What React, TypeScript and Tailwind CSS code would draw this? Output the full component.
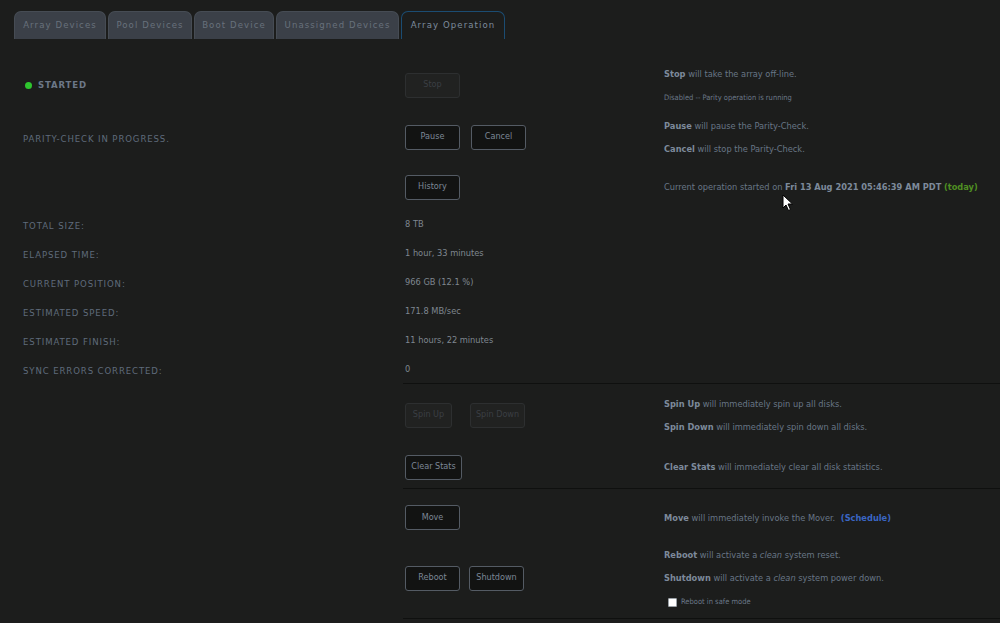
import React from "react";

const font = "font-['DejaVu_Sans_Condensed','Liberation_Sans',sans-serif]";

const Btn: React.FC<{ label: string; w?: string; disabled?: boolean }> = ({ label, w = "w-[55px]", disabled }) => (
  <div
    className={`${w} h-[25px] flex items-center justify-center rounded-[3px] border text-[9px] ${
      disabled
        ? "bg-[#212221] border-[#2d2f30] text-[#3b3f44]"
        : "bg-[#121312] border-[#545b64] text-[#7c8796]"
    }`}
  >
    {label}
  </div>
);

const Line: React.FC<{ children: React.ReactNode }> = ({ children }) => (
  <p className="text-[9.2px] leading-[14px] text-[#687686]">{children}</p>
);

const B: React.FC<{ children: React.ReactNode }> = ({ children }) => (
  <span className="font-bold text-[#7d8a9b]">{children}</span>
);

const Label: React.FC<{ children: React.ReactNode }> = ({ children }) => (
  <span className="pl-[23px] text-[9.5px] tracking-[0.9px] uppercase text-[#5f6b7b]">{children}</span>
);

const tabs = [
  { name: "Array Devices", w: "w-[92px]" },
  { name: "Pool Devices", w: "w-[84px]" },
  { name: "Boot Device", w: "w-[80px]" },
  { name: "Unassigned Devices", w: "w-[123px]" },
];

const stats = [
  ["Total size:", "8 TB"],
  ["Elapsed time:", "1 hour, 33 minutes"],
  ["Current position:", "966 GB (12.1 %)"],
  ["Estimated speed:", "171.8 MB/sec"],
  ["Estimated finish:", "11 hours, 22 minutes"],
  ["Sync errors corrected:", "0"],
];

const Row: React.FC<{
  h: string;
  gap?: string;
  midGap?: string;
  left?: React.ReactNode;
  mid?: React.ReactNode;
  right?: React.ReactNode;
}> = ({ h, gap = "gap-[9px]", midGap = "gap-[11px]", left, mid, right }) => (
  <div className={`grid grid-cols-[405px_259px_1fr] items-center ${h}`}>
    <div>{left}</div>
    <div className={`flex ${midGap}`}>{mid}</div>
    <div className={`flex flex-col ${gap}`}>{right}</div>
  </div>
);

const Divider = () => <div className="ml-[403px] h-px bg-[#0f100f]" />;

export default function App() {
  return (
    <div className={`relative w-[1000px] h-[623px] overflow-hidden bg-[#1c1d1c] ${font}`}>
      {/* tabs */}
      <div className="flex items-end gap-[2px] pl-[14px] pt-[11px] h-[39px]">
        {tabs.map((t) => (
          <div
            key={t.name}
            className={`${t.w} h-[28px] flex items-center justify-center rounded-t-[7px] bg-[#3b4048] border border-b-0 border-[#464c54] text-[9.5px] tracking-[1.1px] text-[#68717c]`}
          >
            {t.name}
          </div>
        ))}
        <div className="w-[104px] h-[28px] flex items-center justify-center rounded-t-[7px] border border-b-0 border-[#1b4c72] text-[9.5px] tracking-[1.1px] text-[#7d8c9d]">
          Array Operation
        </div>
      </div>

      <div className="pt-[22px]">
        <Row
          h="h-[48px]"
          gap="gap-[12px]"
          left={
            <div className="flex items-center gap-[6px] pl-[25px]">
              <span className="w-[7px] h-[7px] rounded-full bg-[#2ec52e]" />
              <span className="text-[9.5px] font-bold tracking-[0.9px] text-[#6c7888]">STARTED</span>
            </div>
          }
          mid={<Btn label="Stop" disabled />}
          right={
            <>
              <Line>
                <B>Stop</B> will take the array off-line.
              </Line>
              <p className="text-[7.5px] leading-[10px] text-[#6b7888]">Disabled -- Parity operation is running</p>
            </>
          }
        />
        <Row
          h="h-[56px]"
          left={<Label>Parity-Check in progress.</Label>}
          mid={
            <>
              <Btn label="Pause" />
              <Btn label="Cancel" />
            </>
          }
          right={
            <>
              <Line>
                <B>Pause</B> will pause the Parity-Check.
              </Line>
              <Line>
                <B>Cancel</B> will stop the Parity-Check.
              </Line>
            </>
          }
        />
        <Row
          h="h-[44px]"
          mid={<Btn label="History" />}
          right={
            <Line>
              Current operation started on <B>Fri 13 Aug 2021 05:46:39 AM PDT</B>{" "}
              <span className="font-bold text-[#4f8f22]">(today)</span>
            </Line>
          }
        />
        {stats.map(([k, v]) => (
          <Row
            key={k}
            h="h-[29px]"
            left={<Label>{k}</Label>}
            mid={<span className="text-[9.2px] text-[#7f8790]">{v}</span>}
          />
        ))}
        <Divider />
        <Row
          h="h-[62px]"
          midGap="gap-[18px]"
          mid={
            <>
              <Btn label="Spin Up" w="w-[47px]" disabled />
              <Btn label="Spin Down" disabled />
            </>
          }
          right={
            <>
              <Line>
                <B>Spin Up</B> will immediately spin up all disks.
              </Line>
              <Line>
                <B>Spin Down</B> will immediately spin down all disks.
              </Line>
            </>
          }
        />
        <Row
          h="h-[42px]"
          mid={<Btn label="Clear Stats" w="w-[57px]" />}
          right={
            <Line>
              <B>Clear Stats</B> will immediately clear all disk statistics.
            </Line>
          }
        />
        <Divider />
        <Row
          h="h-[57px]"
          mid={<Btn label="Move" />}
          right={
            <Line>
              <B>Move</B> will immediately invoke the Mover.{" "}
              <span className="ml-[3px] font-bold text-[#3a66c4]">(Schedule)</span>
            </Line>
          }
        />
        <Row
          h="h-[64px]"
          midGap="gap-[9px]"
          right={
            <>
              <Line>
                <B>Reboot</B> will activate a <i>clean</i> system reset.
              </Line>
              <Line>
                <B>Shutdown</B> will activate a <i>clean</i> system power down.
              </Line>
              <label className="mt-[2px] flex items-center gap-[4px] pl-[4px] text-[7.5px] text-[#6b7888]">
                <span className="w-[9px] h-[9px] rounded-[1px] bg-white border border-[#9aa0a6]" />
                Reboot in safe mode
              </label>
            </>
          }
          mid={
            <>
              <Btn label="Reboot" />
              <Btn label="Shutdown" />
            </>
          }
        />
        <div className="h-[8px]" />
        <Divider />
      </div>

      {/* mouse pointer */}
      <svg className="absolute left-[782px] top-[194px]" width="12" height="18" viewBox="0 0 12 18">
        <path d="M1 1 L1 14 L4 11 L6.5 16.5 L8.5 15.5 L6 10 L10.5 10 Z" fill="white" stroke="black" strokeWidth="1" />
      </svg>
    </div>
  );
}
